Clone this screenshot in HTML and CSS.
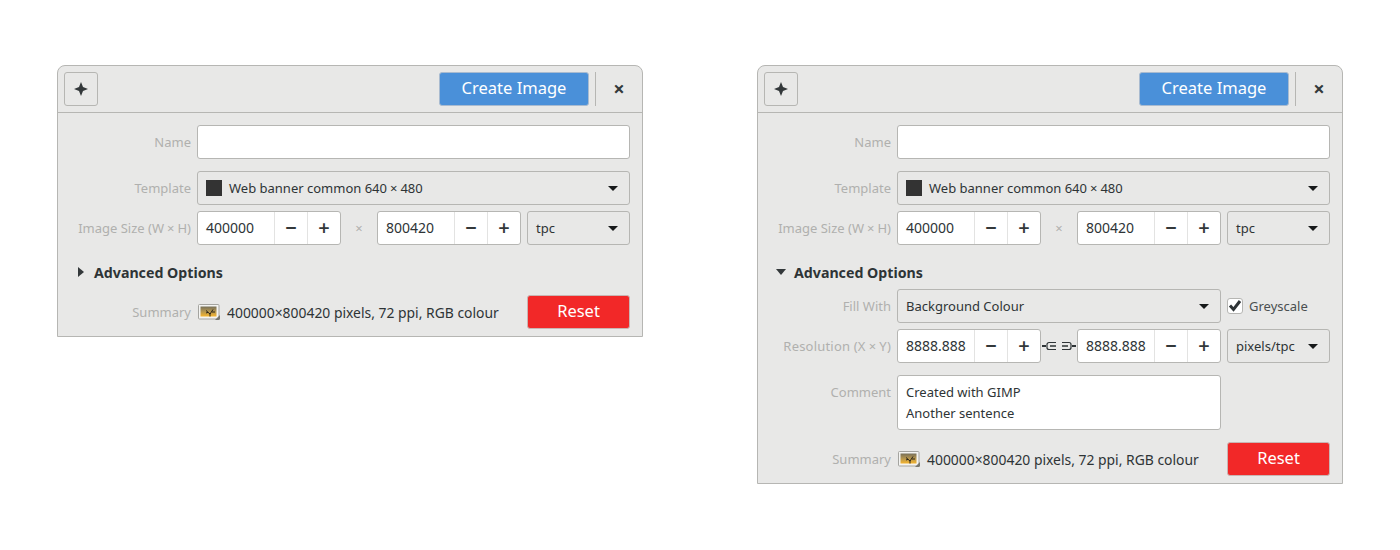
FILE: index.html
```html
<!DOCTYPE html>
<html lang="en">

<head>
  <meta charset="UTF-8">
  <meta name="viewport" content="width=device-width, initial-scale=1.0">
  <title>Create Image</title>
  <link rel="stylesheet" href="styles.css">
</head>

<body>
  <svg class="defs" width="0" height="0">
    <defs>
      <linearGradient id="sky" x1="0" y1="0" x2="0" y2="1">
        <stop offset="0" stop-color="#77705a"/>
        <stop offset="0.5" stop-color="#b5964e"/>
        <stop offset="1" stop-color="#f6b52e"/>
      </linearGradient>
      <symbol id="thumb" viewBox="0 0 22 16">
        <rect x="0.5" y="0.500" width="20.500" height="14.500" rx="1" fill="#f4f4f2" stroke="#a4a4a0"/>
        <rect x="2.500" y="2.500" width="16" height="10" fill="url(#sky)"/>
        <path d="M12 12.500V9M12 10L8 6.500M12 10l3-4.500M10 8.300L8 9M14 8l3 0" stroke="#2a2418" stroke-width="1" fill="none"/>
        <path d="M22 11v3.500a1.500 1.500 0 0 1-1.500 1.500H17z" fill="#77776f"/>
      </symbol>
      <symbol id="arrow" viewBox="0 0 10 5">
        <path d="M0 0h10L5 5z" fill="#16191a"/>
      </symbol>
    </defs>
  </svg>

  <section class="dialog">
    <header class="bar">
      <button class="btn square" type="button">
        <svg width="16" height="16" viewBox="0 0 16 16"><path d="M8 1l2 5 5 2-5 2-2 5-2-5-5-2 5-2z" fill="#33383a"/></svg>
      </button>
      <button class="btn create" type="button">Create Image</button>
      <span class="sep"></span>
      <span class="close">×</span>
    </header>
    <div class="body">
      <div class="row">
        <label>Name</label>
        <div class="entry"></div>
      </div>
      <div class="row">
        <label>Template</label>
        <div class="select">
          <span class="swatch"></span>
          <span class="grow">Web banner common 640<span class="x">×</span>480</span>
          <svg class="arrow"><use href="#arrow"/></svg>
        </div>
      </div>
      <div class="row tight">
        <label>Image Size (W<span class="x">×</span>H)</label>
        <div class="fields">
          <div class="spin"><span class="val">400000</span><span class="step">−</span><span class="step">+</span></div>
          <span class="times">×</span>
          <div class="spin"><span class="val">800420</span><span class="step">−</span><span class="step">+</span></div>
          <div class="select unit"><span class="grow">tpc</span><svg class="arrow"><use href="#arrow"/></svg></div>
        </div>
      </div>
      <div class="expander">
        <svg width="10" height="10" viewBox="0 0 10 10"><path d="M2 0l6 5-6 5z" fill="#33383a"/></svg>
        <span>Advanced Options</span>
      </div>
      <div class="row summary">
        <label>Summary</label>
        <div class="fields">
          <svg class="thumb"><use href="#thumb"/></svg>
          <span class="grow info">400000×800420 pixels, 72 ppi, RGB colour</span>
          <button class="btn reset" type="button">Reset</button>
        </div>
      </div>
    </div>
  </section>

  <section class="dialog">
    <header class="bar">
      <button class="btn square" type="button">
        <svg width="16" height="16" viewBox="0 0 16 16"><path d="M8 1l2 5 5 2-5 2-2 5-2-5-5-2 5-2z" fill="#33383a"/></svg>
      </button>
      <button class="btn create" type="button">Create Image</button>
      <span class="sep"></span>
      <span class="close">×</span>
    </header>
    <div class="body">
      <div class="row">
        <label>Name</label>
        <div class="entry"></div>
      </div>
      <div class="row">
        <label>Template</label>
        <div class="select">
          <span class="swatch"></span>
          <span class="grow">Web banner common 640<span class="x">×</span>480</span>
          <svg class="arrow"><use href="#arrow"/></svg>
        </div>
      </div>
      <div class="row tight">
        <label>Image Size (W<span class="x">×</span>H)</label>
        <div class="fields">
          <div class="spin"><span class="val">400000</span><span class="step">−</span><span class="step">+</span></div>
          <span class="times">×</span>
          <div class="spin"><span class="val">800420</span><span class="step">−</span><span class="step">+</span></div>
          <div class="select unit"><span class="grow">tpc</span><svg class="arrow"><use href="#arrow"/></svg></div>
        </div>
      </div>
      <div class="expander open">
        <svg width="10" height="10" viewBox="0 0 10 10"><path d="M0 2h10L5 8z" fill="#33383a"/></svg>
        <span>Advanced Options</span>
      </div>
      <div class="row fill">
        <label>Fill With</label>
        <div class="fields">
          <div class="select wide"><span class="grow">Background Colour</span><svg class="arrow"><use href="#arrow"/></svg></div>
          <span class="check">
            <svg width="14" height="14" viewBox="0 0 14 14"><path d="M2 6.500l3.500 4L12 2" fill="none" stroke="#2e3436" stroke-width="3"/></svg>
          </span>
          <span class="check-label">Greyscale</span>
        </div>
      </div>
      <div class="row tight">
        <label class="long">Resolution (X<span class="x">×</span>Y)</label>
        <div class="fields">
          <div class="spin"><span class="val">8888.888</span><span class="step">−</span><span class="step">+</span></div>
          <svg class="chain" width="36" height="10" viewBox="0 0 36 10">
            <path d="M1 5h4M31 5h4" stroke="#2e3436" stroke-width="2" fill="none"/>
            <path d="M9 5h6M21 5h6" stroke="#2e3436" stroke-width="1.500" fill="none"/>
            <path d="M15 1.500H8a2 2 0 0 0-2 2v3a2 2 0 0 0 2 2h7M21 1.500h7a2 2 0 0 1 2 2v3a2 2 0 0 1-2 2h-7" stroke="#2e3436" stroke-width="1.200" fill="none"/>
          </svg>
          <div class="spin"><span class="val">8888.888</span><span class="step">−</span><span class="step">+</span></div>
          <div class="select unit"><span class="grow">pixels/tpc</span><svg class="arrow"><use href="#arrow"/></svg></div>
        </div>
      </div>
      <div class="row comment">
        <label>Comment</label>
        <div class="textarea">Created with GIMP<br>Another sentence</div>
      </div>
      <div class="row summary">
        <label>Summary</label>
        <div class="fields">
          <svg class="thumb"><use href="#thumb"/></svg>
          <span class="grow info">400000×800420 pixels, 72 ppi, RGB colour</span>
          <button class="btn reset" type="button">Reset</button>
        </div>
      </div>
    </div>
  </section>
</body>

</html>
```

FILE: styles.css
```css
body {
  margin: 0;
  padding: 65px 57px 0;
  display: flex;
  align-items: flex-start;
  gap: 114px;
  background: #fff;
  color: #2e3436;
  font-family: "Noto Sans", sans-serif;
  font-size: 13px;
}

.defs {
  position: absolute;
}

.dialog {
  width: 586px;
  box-sizing: border-box;
  border: 1px solid #b6b6b3;
  border-radius: 8px 8px 0 0;
  background: #e8e8e7;
}

.bar {
  display: flex;
  align-items: flex-start;
  height: 40px;
  padding: 6px 6px 0;
  border-bottom: 1px solid #b6b6b3;
}

.btn {
  height: 34px;
  box-sizing: border-box;
  border: 1px solid #b6b6b3;
  border-radius: 3px;
  background: #e8e8e7;
  padding: 0;
  font-family: inherit;
}

.square {
  width: 34px;
  display: flex;
  align-items: center;
  justify-content: center;
}

.create {
  width: 150px;
  margin-left: auto;
  padding-bottom: 4px;
  background: #4a90d9;
  border-color: #a9bbd0;
  color: #fff;
  font-size: 16.500px;
}

.sep {
  width: 1px;
  height: 34px;
  margin: 0 17px 0 6px;
  background: #b6b6b3;
}

.close {
  width: 12px;
  margin-right: 11px;
  text-align: center;
  font-size: 20px;
  font-weight: bold;
  line-height: 34px;
  color: #33383a;
}

.body {
  padding: 12px 12px 7px;
}

.row {
  display: grid;
  grid-template-columns: 121px 433px;
  column-gap: 6px;
  align-items: center;
  margin-bottom: 12px;
}

.row label {
  text-align: right;
  color: #b0b0ae;
  white-space: nowrap;
}

.row label.long {
  letter-spacing: 0.2px;
}

.row:nth-child(2) {
  margin-bottom: 6px;
}

.x {
  margin: 0 3px;
}

.entry,
.select,
.spin,
.textarea {
  box-sizing: border-box;
  height: 34px;
  border: 1px solid #b6b6b3;
  border-radius: 3px;
}

.entry,
.spin,
.textarea {
  background: #fff;
}

.select {
  display: flex;
  align-items: center;
  padding: 0 8px;
  background: #e8e8e7;
}

.swatch {
  width: 16px;
  height: 16px;
  margin-right: 7px;
  background: #333;
}

.grow {
  flex: 1;
  white-space: nowrap;
}

.arrow {
  width: 10px;
  height: 5px;
  margin-right: 3px;
}

.fields {
  display: flex;
  align-items: center;
}

.spin {
  display: flex;
  width: 144px;
  flex: none;
}

.val {
  width: 76px;
  padding-left: 8px;
  box-sizing: border-box;
  font-size: 14px;
  line-height: 32px;
}

.step {
  width: 33px;
  box-sizing: border-box;
  border-left: 1px solid #e3e3e2;
  text-align: center;
  font-size: 20px;
  font-weight: 600;
  line-height: 31px;
  color: #33383a;
}

.times {
  width: 36px;
  text-align: center;
  color: #b0b0ae;
}

.unit {
  width: 103px;
  margin-left: 6px;
  flex: none;
}

.expander {
  display: flex;
  align-items: center;
  height: 20px;
  margin: 17px 0 13px 6px;
  gap: 8px;
  font-size: 14.200px;
  font-weight: bold;
}

.expander.open {
  margin-bottom: 7px;
}

.expander svg {
  width: 10px;
  flex: none;
}

.summary {
  margin-bottom: 0;
}

.summary .fields {
  height: 34px;
}

.thumb {
  width: 22px;
  height: 16px;
  margin: 0 7px 0 1px;
}

.info {
  font-size: 13.900px;
}

.reset {
  width: 103px;
  padding-bottom: 3px;
  background: #f22828;
  border-color: #c9b5b3;
  color: #fff;
  font-size: 16.500px;
}

.fill {
  margin-bottom: 6px;
}

.wide {
  width: 324px;
  flex: none;
}

.check {
  width: 14px;
  height: 14px;
  margin: 0 6px;
  border: 1px solid #b6b6b3;
  border-radius: 3px;
  background: #fff;
  display: flex;
}

.check-label {
  color: #4a4f50;
}

.chain {
  flex: none;
}

.comment {
  align-items: start;
  margin-top: 12px;
}

.comment label {
  padding-top: 8px;
}

.textarea {
  width: 324px;
  height: 55px;
  padding: 6px 8px;
  line-height: 21px;
}
```
